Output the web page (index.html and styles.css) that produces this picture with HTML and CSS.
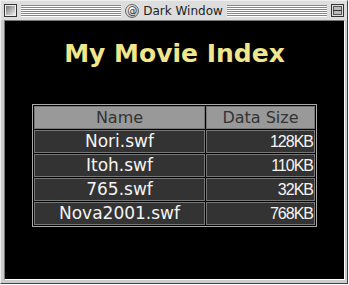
FILE: index.html
```html
<!DOCTYPE html>
<html lang="en">
<head>
    <title>Dark Window</title>
    <link rel="stylesheet" href="styles.css">
</head>
<body>
    <div class="window">
        <div class="titlebar">
            <span class="close-box">
                <svg width="13" height="13" viewBox="0 0 13 13">
                    <defs>
                        <linearGradient id="cb" x1="0" y1="0" x2="1" y2="1">
                            <stop offset="0" stop-color="#777"/>
                            <stop offset="1" stop-color="#eee"/>
                        </linearGradient>
                    </defs>
                    <rect x="0.5" y="0.5" width="12" height="12" fill="#eee" stroke="#333"/>
                    <rect x="2" y="2" width="9" height="9" fill="url(#cb)"/>
                </svg>
            </span>
            <span class="stripes"></span>
            <span class="title"><span class="at-icon">@</span>Dark Window</span>
            <span class="stripes"></span>
            <span class="zoom-box">
                <svg width="13" height="13" viewBox="0 0 13 13">
                    <rect x="0.5" y="0.5" width="12" height="12" fill="#ddd" stroke="#333"/>
                    <rect x="2.5" y="2.5" width="8" height="8" fill="#bbb" stroke="#555"/>
                    <line x1="2" y1="6.5" x2="11" y2="6.5" stroke="#333"/>
                </svg>
            </span>
        </div>
        <div class="content">
            <h1 class="heading">My Movie Index</h1>
            <table class="movies">
                <tr>
                    <th class="name">Name</th>
                    <th class="size">Data Size</th>
                </tr>
                <tr>
                    <td class="name">Nori.swf</td>
                    <td class="size">128KB</td>
                </tr>
                <tr>
                    <td class="name">Itoh.swf</td>
                    <td class="size">110KB</td>
                </tr>
                <tr>
                    <td class="name">765.swf</td>
                    <td class="size">32KB</td>
                </tr>
                <tr>
                    <td class="name">Nova2001.swf</td>
                    <td class="size">768KB</td>
                </tr>
            </table>
        </div>
    </div>
</body>
</html>
```
FILE: styles.css
```css
*{
    margin: 0;
    box-sizing: border-box;
}
body{
    background-color: #fff;
    font-family: "DejaVu Sans", sans-serif;
}

.window{
    width: 348px;
    height: 284px;
    background-color: #ccc;
    border-top: 1px solid #eee;
    border-left: 1px solid #eee;
    border-right: 1px solid #444;
    border-bottom: 1px solid #444;
    display: flex;
    flex-direction: column;
}

/* title bar */
.titlebar{
    height: 19px;
    display: flex;
    align-items: center;
    padding: 0 3px;
    background-color: #ddd;
}
.close-box, .zoom-box{
    width: 13px;
    height: 13px;
    display: flex;
}
.stripes{
    flex: 1;
    height: 12px;
    margin: 0 4px;
    background: repeating-linear-gradient(to bottom, #888 0, #888 1px, #fff 1px, #fff 2px);
}
.title{
    display: flex;
    align-items: center;
    gap: 4px;
    font-size: 12px;
    color: #222;
    white-space: nowrap;
}
.at-icon{
    width: 14px;
    height: 14px;
    border-radius: 50%;
    border: 1px solid #666;
    background: radial-gradient(circle at 40% 35%, #fff, #aaa);
    font-size: 10px;
    line-height: 12px;
    text-align: center;
    color: #333;
}

/* black content area */
.content{
    height: 260px;
    margin: 0 2px 0 3px;
    background-color: #000;
    border-top: 1px solid #777;
    border-left: 1px solid #777;
    border-right: 1px solid #fff;
    border-bottom: 1px solid #fff;
    padding-top: 18px;
}
.heading{
    font-size: 25px;
    line-height: 30px;
    font-weight: bold;
    text-align: center;
    color: #f0e68c;
}

/* table */
.movies{
    margin: 35px auto 0;
    border-collapse: separate;
    border-spacing: 1px;
    border: 1px solid #aaa;
}
.movies th, .movies td{
    padding: 0;
    border: 1px solid #777;
    line-height: 21px;
}
.movies th{
    background-color: #999;
    color: #333;
    font-weight: normal;
    font-size: 16px;
    text-align: center;
}
.movies td{
    background-color: #333;
    color: #f4f4f4;
    font-size: 17px;
}
.movies .name{
    width: 171px;
    text-align: center;
}
.movies .size{
    width: 109px;
}
.movies td.size{
    text-align: right;
    padding-right: 1px;
    font-family: "Liberation Sans", sans-serif;
    font-size: 16px;
    letter-spacing: -1px;
}
```
